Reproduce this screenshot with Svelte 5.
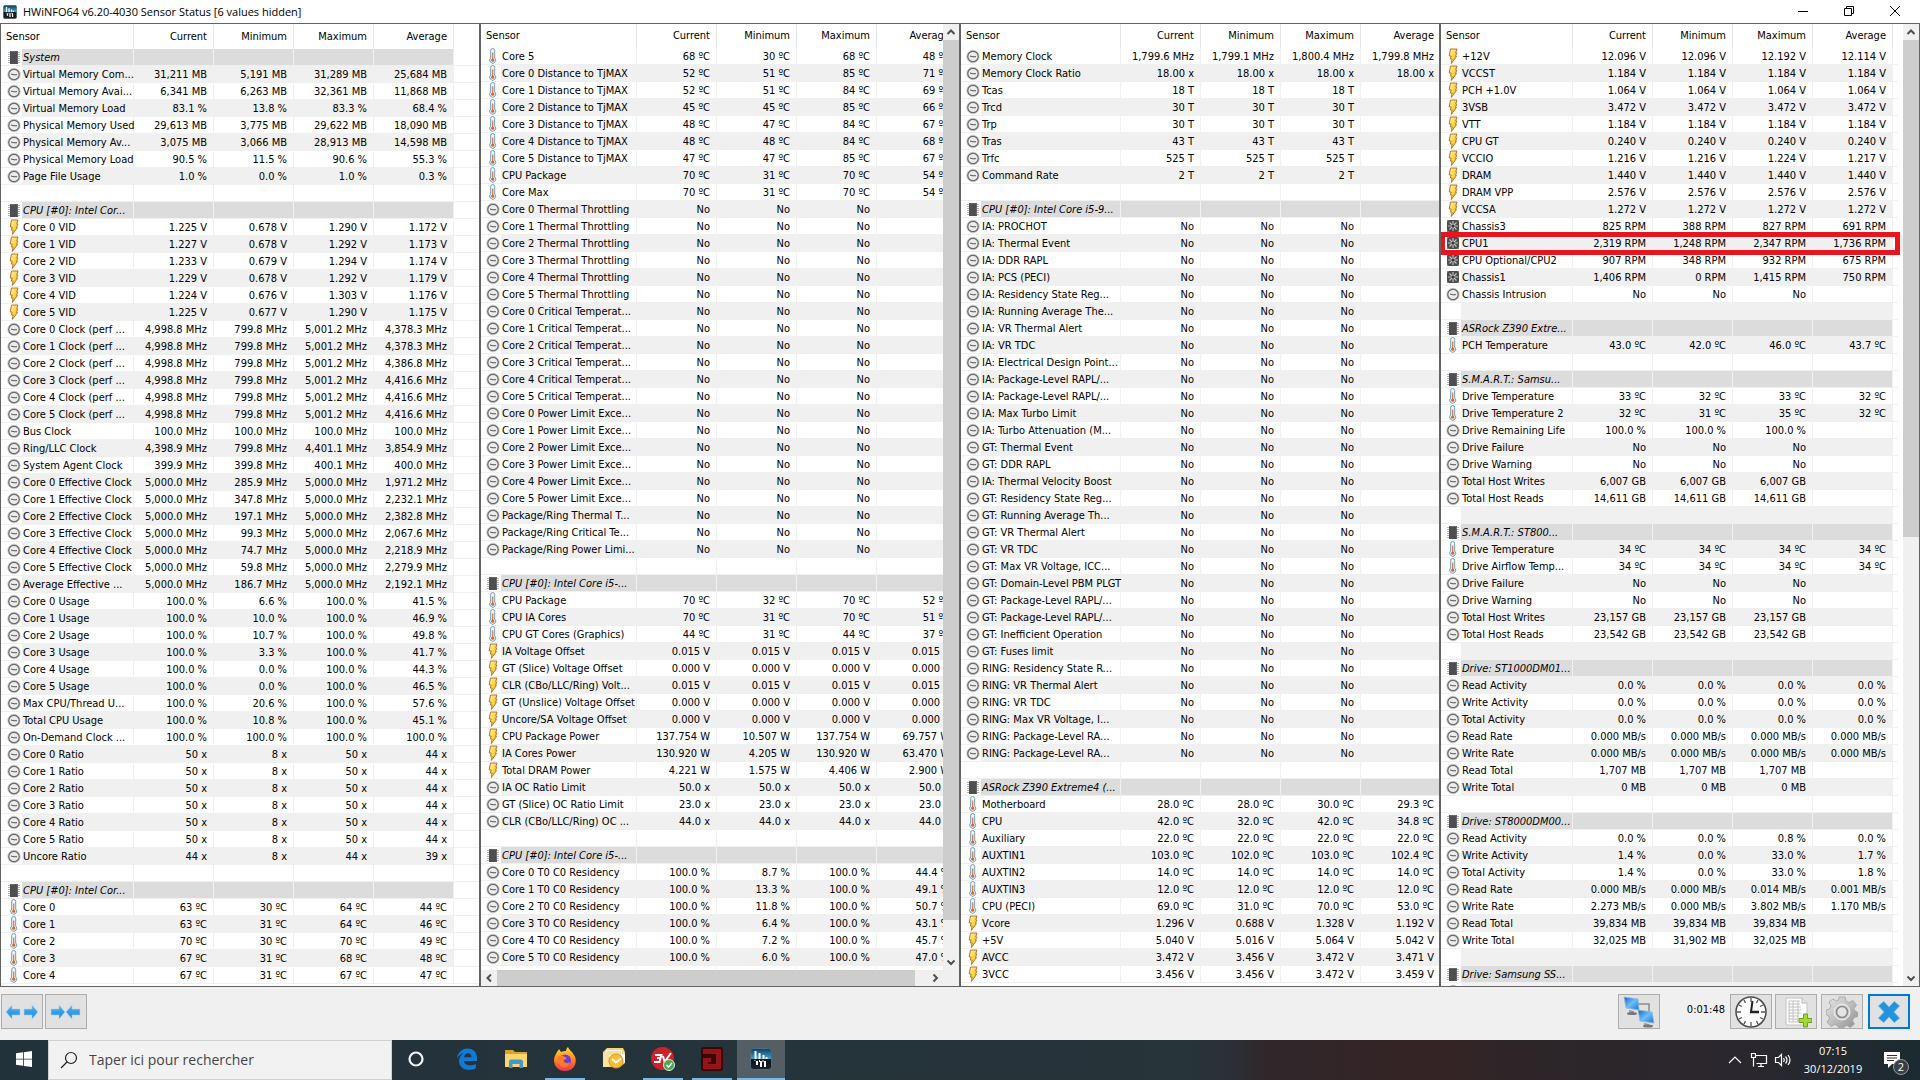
<script>
  const parse = (text) =>
    text.trim().split('\n').map((line) => {
      const [kind, name = '', ...values] = line.split('|');
      if (kind === 'n') return { kind: 'clock', name, values: ['No', 'No', 'No', ''] };
      if (kind === 'm') return { kind: 'fan', name, values: [...values], marked: true };
      const kinds = { h: 'chip', c: 'clock', v: 'bolt', t: 'temp', f: 'fan', '-': 'blank' };
      return { kind: kinds[kind], name, values: [0, 1, 2, 3].map((i) => values[i] ?? '') };
    });

  const panes = [
    {
      first: true, icon: 21, label: 112,
      rows: parse(`
h|System
c|Virtual Memory Com...|31,211 MB|5,191 MB|31,289 MB|25,684 MB
c|Virtual Memory Avai...|6,341 MB|6,263 MB|32,361 MB|11,868 MB
c|Virtual Memory Load|83.1 %|13.8 %|83.3 %|68.4 %
c|Physical Memory Used|29,613 MB|3,775 MB|29,622 MB|18,090 MB
c|Physical Memory Av...|3,075 MB|3,066 MB|28,913 MB|14,598 MB
c|Physical Memory Load|90.5 %|11.5 %|90.6 %|55.3 %
c|Page File Usage|1.0 %|0.0 %|1.0 %|0.3 %
-
h|CPU [#0]: Intel Cor...
v|Core 0 VID|1.225 V|0.678 V|1.290 V|1.172 V
v|Core 1 VID|1.227 V|0.678 V|1.292 V|1.173 V
v|Core 2 VID|1.233 V|0.679 V|1.294 V|1.174 V
v|Core 3 VID|1.229 V|0.678 V|1.292 V|1.179 V
v|Core 4 VID|1.224 V|0.676 V|1.303 V|1.176 V
v|Core 5 VID|1.225 V|0.677 V|1.290 V|1.175 V
c|Core 0 Clock (perf ...|4,998.8 MHz|799.8 MHz|5,001.2 MHz|4,378.3 MHz
c|Core 1 Clock (perf ...|4,998.8 MHz|799.8 MHz|5,001.2 MHz|4,378.3 MHz
c|Core 2 Clock (perf ...|4,998.8 MHz|799.8 MHz|5,001.2 MHz|4,386.8 MHz
c|Core 3 Clock (perf ...|4,998.8 MHz|799.8 MHz|5,001.2 MHz|4,416.6 MHz
c|Core 4 Clock (perf ...|4,998.8 MHz|799.8 MHz|5,001.2 MHz|4,416.6 MHz
c|Core 5 Clock (perf ...|4,998.8 MHz|799.8 MHz|5,001.2 MHz|4,416.6 MHz
c|Bus Clock|100.0 MHz|100.0 MHz|100.0 MHz|100.0 MHz
c|Ring/LLC Clock|4,398.9 MHz|799.8 MHz|4,401.1 MHz|3,854.9 MHz
c|System Agent Clock|399.9 MHz|399.8 MHz|400.1 MHz|400.0 MHz
c|Core 0 Effective Clock|5,000.0 MHz|285.9 MHz|5,000.0 MHz|1,971.2 MHz
c|Core 1 Effective Clock|5,000.0 MHz|347.8 MHz|5,000.0 MHz|2,232.1 MHz
c|Core 2 Effective Clock|5,000.0 MHz|197.1 MHz|5,000.0 MHz|2,382.8 MHz
c|Core 3 Effective Clock|5,000.0 MHz|99.3 MHz|5,000.0 MHz|2,067.6 MHz
c|Core 4 Effective Clock|5,000.0 MHz|74.7 MHz|5,000.0 MHz|2,218.9 MHz
c|Core 5 Effective Clock|5,000.0 MHz|59.8 MHz|5,000.0 MHz|2,279.9 MHz
c|Average Effective ...|5,000.0 MHz|186.7 MHz|5,000.0 MHz|2,192.1 MHz
c|Core 0 Usage|100.0 %|6.6 %|100.0 %|41.5 %
c|Core 1 Usage|100.0 %|10.0 %|100.0 %|46.9 %
c|Core 2 Usage|100.0 %|10.7 %|100.0 %|49.8 %
c|Core 3 Usage|100.0 %|3.3 %|100.0 %|41.7 %
c|Core 4 Usage|100.0 %|0.0 %|100.0 %|44.3 %
c|Core 5 Usage|100.0 %|0.0 %|100.0 %|46.5 %
c|Max CPU/Thread U...|100.0 %|20.6 %|100.0 %|57.6 %
c|Total CPU Usage|100.0 %|10.8 %|100.0 %|45.1 %
c|On-Demand Clock ...|100.0 %|100.0 %|100.0 %|100.0 %
c|Core 0 Ratio|50 x|8 x|50 x|44 x
c|Core 1 Ratio|50 x|8 x|50 x|44 x
c|Core 2 Ratio|50 x|8 x|50 x|44 x
c|Core 3 Ratio|50 x|8 x|50 x|44 x
c|Core 4 Ratio|50 x|8 x|50 x|44 x
c|Core 5 Ratio|50 x|8 x|50 x|44 x
c|Uncore Ratio|44 x|8 x|44 x|39 x
-
h|CPU [#0]: Intel Cor...
t|Core 0|63 ºC|30 ºC|64 ºC|44 ºC
t|Core 1|63 ºC|31 ºC|64 ºC|46 ºC
t|Core 2|70 ºC|30 ºC|70 ºC|49 ºC
t|Core 3|67 ºC|31 ºC|68 ºC|48 ºC
t|Core 4|67 ºC|31 ºC|67 ºC|47 ºC`)
    },
    {
      icon: 20, label: 136, vthumb: 96.3, hthumb: 97.2,
      rows: parse(`
t|Core 5|68 ºC|30 ºC|68 ºC|48 ºC
t|Core 0 Distance to TjMAX|52 ºC|51 ºC|85 ºC|71 ºC
t|Core 1 Distance to TjMAX|52 ºC|51 ºC|84 ºC|69 ºC
t|Core 2 Distance to TjMAX|45 ºC|45 ºC|85 ºC|66 ºC
t|Core 3 Distance to TjMAX|48 ºC|47 ºC|84 ºC|67 ºC
t|Core 4 Distance to TjMAX|48 ºC|48 ºC|84 ºC|68 ºC
t|Core 5 Distance to TjMAX|47 ºC|47 ºC|85 ºC|67 ºC
t|CPU Package|70 ºC|31 ºC|70 ºC|54 ºC
t|Core Max|70 ºC|31 ºC|70 ºC|54 ºC
n|Core 0 Thermal Throttling
n|Core 1 Thermal Throttling
n|Core 2 Thermal Throttling
n|Core 3 Thermal Throttling
n|Core 4 Thermal Throttling
n|Core 5 Thermal Throttling
n|Core 0 Critical Temperat...
n|Core 1 Critical Temperat...
n|Core 2 Critical Temperat...
n|Core 3 Critical Temperat...
n|Core 4 Critical Temperat...
n|Core 5 Critical Temperat...
n|Core 0 Power Limit Exce...
n|Core 1 Power Limit Exce...
n|Core 2 Power Limit Exce...
n|Core 3 Power Limit Exce...
n|Core 4 Power Limit Exce...
n|Core 5 Power Limit Exce...
n|Package/Ring Thermal T...
n|Package/Ring Critical Te...
n|Package/Ring Power Limi...
-
h|CPU [#0]: Intel Core i5-...
t|CPU Package|70 ºC|32 ºC|70 ºC|52 ºC
t|CPU IA Cores|70 ºC|31 ºC|70 ºC|51 ºC
t|CPU GT Cores (Graphics)|44 ºC|31 ºC|44 ºC|37 ºC
v|IA Voltage Offset|0.015 V|0.015 V|0.015 V|0.015 V
v|GT (Slice) Voltage Offset|0.000 V|0.000 V|0.000 V|0.000 V
v|CLR (CBo/LLC/Ring) Volt...|0.015 V|0.015 V|0.015 V|0.015 V
v|GT (Unslice) Voltage Offset|0.000 V|0.000 V|0.000 V|0.000 V
v|Uncore/SA Voltage Offset|0.000 V|0.000 V|0.000 V|0.000 V
v|CPU Package Power|137.754 W|10.507 W|137.754 W|69.757 W
v|IA Cores Power|130.920 W|4.205 W|130.920 W|63.470 W
v|Total DRAM Power|4.221 W|1.575 W|4.406 W|2.900 W
c|IA OC Ratio Limit|50.0 x|50.0 x|50.0 x|50.0 x
c|GT (Slice) OC Ratio Limit|23.0 x|23.0 x|23.0 x|23.0 x
c|CLR (CBo/LLC/Ring) OC ...|44.0 x|44.0 x|44.0 x|44.0 x
-
h|CPU [#0]: Intel Core i5-...
c|Core 0 T0 C0 Residency|100.0 %|8.7 %|100.0 %|44.4 %
c|Core 1 T0 C0 Residency|100.0 %|13.3 %|100.0 %|49.1 %
c|Core 2 T0 C0 Residency|100.0 %|11.8 %|100.0 %|50.7 %
c|Core 3 T0 C0 Residency|100.0 %|6.4 %|100.0 %|43.1 %
c|Core 4 T0 C0 Residency|100.0 %|7.2 %|100.0 %|45.7 %
c|Core 5 T0 C0 Residency|100.0 %|6.0 %|100.0 %|47.0 %
-`)
    },
    {
      icon: 20, label: 140,
      rows: parse(`
c|Memory Clock|1,799.6 MHz|1,799.1 MHz|1,800.4 MHz|1,799.8 MHz
c|Memory Clock Ratio|18.00 x|18.00 x|18.00 x|18.00 x
c|Tcas|18 T|18 T|18 T
c|Trcd|30 T|30 T|30 T
c|Trp|30 T|30 T|30 T
c|Tras|43 T|43 T|43 T
c|Trfc|525 T|525 T|525 T
c|Command Rate|2 T|2 T|2 T
-
h|CPU [#0]: Intel Core i5-9...
n|IA: PROCHOT
n|IA: Thermal Event
n|IA: DDR RAPL
n|IA: PCS (PECI)
n|IA: Residency State Reg...
n|IA: Running Average The...
n|IA: VR Thermal Alert
n|IA: VR TDC
n|IA: Electrical Design Point...
n|IA: Package-Level RAPL/...
n|IA: Package-Level RAPL/...
n|IA: Max Turbo Limit
n|IA: Turbo Attenuation (M...
n|GT: Thermal Event
n|GT: DDR RAPL
n|IA: Thermal Velocity Boost
n|GT: Residency State Reg...
n|GT: Running Average Th...
n|GT: VR Thermal Alert
n|GT: VR TDC
n|GT: Max VR Voltage, ICC...
n|GT: Domain-Level PBM PLGT
n|GT: Package-Level RAPL/...
n|GT: Package-Level RAPL/...
n|GT: Inefficient Operation
n|GT: Fuses limit
n|RING: Residency State R...
n|RING: VR Thermal Alert
n|RING: VR TDC
n|RING: Max VR Voltage, I...
n|RING: Package-Level RA...
n|RING: Package-Level RA...
-
h|ASRock Z390 Extreme4 (...
t|Motherboard|28.0 ºC|28.0 ºC|30.0 ºC|29.3 ºC
t|CPU|42.0 ºC|32.0 ºC|42.0 ºC|34.8 ºC
t|Auxiliary|22.0 ºC|22.0 ºC|22.0 ºC|22.0 ºC
t|AUXTIN1|103.0 ºC|102.0 ºC|103.0 ºC|102.4 ºC
t|AUXTIN2|14.0 ºC|14.0 ºC|14.0 ºC|14.0 ºC
t|AUXTIN3|12.0 ºC|12.0 ºC|12.0 ºC|12.0 ºC
t|CPU (PECI)|69.0 ºC|31.0 ºC|70.0 ºC|53.0 ºC
v|Vcore|1.296 V|0.688 V|1.328 V|1.192 V
v|+5V|5.040 V|5.016 V|5.064 V|5.042 V
v|AVCC|3.472 V|3.456 V|3.472 V|3.471 V
v|3VCC|3.456 V|3.456 V|3.472 V|3.459 V`)
    },
    {
      icon: 20, label: 112, vthumb: 53.4,
      rows: parse(`
v|+12V|12.096 V|12.096 V|12.192 V|12.114 V
v|VCCST|1.184 V|1.184 V|1.184 V|1.184 V
v|PCH +1.0V|1.064 V|1.064 V|1.064 V|1.064 V
v|3VSB|3.472 V|3.472 V|3.472 V|3.472 V
v|VTT|1.184 V|1.184 V|1.184 V|1.184 V
v|CPU GT|0.240 V|0.240 V|0.240 V|0.240 V
v|VCCIO|1.216 V|1.216 V|1.224 V|1.217 V
v|DRAM|1.440 V|1.440 V|1.440 V|1.440 V
v|DRAM VPP|2.576 V|2.576 V|2.576 V|2.576 V
v|VCCSA|1.272 V|1.272 V|1.272 V|1.272 V
f|Chassis3|825 RPM|388 RPM|827 RPM|691 RPM
m|CPU1|2,319 RPM|1,248 RPM|2,347 RPM|1,736 RPM
f|CPU Optional/CPU2|907 RPM|348 RPM|932 RPM|675 RPM
f|Chassis1|1,406 RPM|0 RPM|1,415 RPM|750 RPM
n|Chassis Intrusion
-
h|ASRock Z390 Extre...
t|PCH Temperature|43.0 ºC|42.0 ºC|46.0 ºC|43.7 ºC
-
h|S.M.A.R.T.: Samsu...
t|Drive Temperature|33 ºC|32 ºC|33 ºC|32 ºC
t|Drive Temperature 2|32 ºC|31 ºC|35 ºC|32 ºC
c|Drive Remaining Life|100.0 %|100.0 %|100.0 %
n|Drive Failure
n|Drive Warning
c|Total Host Writes|6,007 GB|6,007 GB|6,007 GB
c|Total Host Reads|14,611 GB|14,611 GB|14,611 GB
-
h|S.M.A.R.T.: ST800...
t|Drive Temperature|34 ºC|34 ºC|34 ºC|34 ºC
t|Drive Airflow Temp...|34 ºC|34 ºC|34 ºC|34 ºC
n|Drive Failure
n|Drive Warning
c|Total Host Writes|23,157 GB|23,157 GB|23,157 GB
c|Total Host Reads|23,542 GB|23,542 GB|23,542 GB
-
h|Drive: ST1000DM01...
c|Read Activity|0.0 %|0.0 %|0.0 %|0.0 %
c|Write Activity|0.0 %|0.0 %|0.0 %|0.0 %
c|Total Activity|0.0 %|0.0 %|0.0 %|0.0 %
c|Read Rate|0.000 MB/s|0.000 MB/s|0.000 MB/s|0.000 MB/s
c|Write Rate|0.000 MB/s|0.000 MB/s|0.000 MB/s|0.000 MB/s
c|Read Total|1,707 MB|1,707 MB|1,707 MB
c|Write Total|0 MB|0 MB|0 MB
-
h|Drive: ST8000DM00...
c|Read Activity|0.0 %|0.0 %|0.8 %|0.0 %
c|Write Activity|1.4 %|0.0 %|33.0 %|1.7 %
c|Total Activity|1.4 %|0.0 %|33.0 %|1.8 %
c|Read Rate|0.000 MB/s|0.000 MB/s|0.014 MB/s|0.001 MB/s
c|Write Rate|2.273 MB/s|0.000 MB/s|3.802 MB/s|1.170 MB/s
c|Read Total|39,834 MB|39,834 MB|39,834 MB
c|Write Total|32,025 MB|31,902 MB|32,025 MB
-
h|Drive: Samsung SS...
c`)
    }
  ];
</script>

<svg class="defs" aria-hidden="true">
  <defs>
    <linearGradient id="gold" x1="0" y1="0" x2="1" y2="1">
      <stop offset="0" stop-color="#fff6c0" /><stop offset=".6" stop-color="#fbd02c" /><stop offset="1" stop-color="#f5b800" />
    </linearGradient>
    <linearGradient id="glass" x1="0" y1="0" x2="0" y2="1">
      <stop offset="0" stop-color="#123d5c" /><stop offset=".48" stop-color="#3d9fce" /><stop offset=".5" stop-color="#0a141c" /><stop offset="1" stop-color="#1a222a" />
    </linearGradient>
    <linearGradient id="blue" x1="0" y1="0" x2="0" y2="1">
      <stop offset="0" stop-color="#4fb4ee" /><stop offset="1" stop-color="#1f87dc" />
    </linearGradient>
    <linearGradient id="screen" x1="0" y1="0" x2="1" y2="1">
      <stop offset="0" stop-color="#1560c8" /><stop offset=".5" stop-color="#6cc0f8" /><stop offset="1" stop-color="#1a6fd6" />
    </linearGradient>
    <linearGradient id="fire" x1="0" y1="0" x2="0" y2="1">
      <stop offset="0" stop-color="#ffde3a" /><stop offset=".5" stop-color="#ff8a1e" /><stop offset="1" stop-color="#f0305a" />
    </linearGradient>
    <linearGradient id="steel" x1="0" y1="0" x2="1" y2="1">
      <stop offset="0" stop-color="#e6e6e6" /><stop offset=".5" stop-color="#bdbdbd" /><stop offset="1" stop-color="#8c8c8c" />
    </linearGradient>
    <symbol id="chip" viewBox="0 0 14 16">
      <path d="M1 3.5h12M1 5.5h12M1 7.5h12M1 9.5h12M1 11.5h12M1 13.5h12" stroke="#b4b4b4" />
      <rect x="3" y="2" width="8" height="13" fill="#4e4e52" /><path d="M3.500 2.500h7v12" fill="none" stroke="#68686c" />
    </symbol>
    <symbol id="clock" viewBox="0 0 14 16">
      <circle cx="7" cy="8.500" r="5.300" fill="#ececec" stroke="#6b6b6b" stroke-width="1.400" />
      <circle cx="7" cy="8.500" r="6.300" fill="none" stroke="#b5b5b5" stroke-width=".6" />
      <path d="M4 8l3 .8 3-.1" fill="none" stroke="#555" />
    </symbol>
    <symbol id="bolt" viewBox="0 0 14 16">
      <path d="M4.500 1h6.500l-1.300 4h1.100l-1.300 3.500h1L5.300 15.500l.8-4.500H4.300l.9-3H3.200z" fill="url(#gold)" stroke="#b87434" />
    </symbol>
    <symbol id="temp" viewBox="0 0 14 16">
      <path d="M4.700 2.500a2 2 0 0 1 4 0V10a3 3 0 1 1-4 0z" fill="#eef6fb" stroke="#6f9db8" />
      <path d="M6.700 4.500v8" stroke="#d8733a" stroke-width="1.200" /><circle cx="6.700" cy="12.200" r="1.600" fill="#d9652a" />
    </symbol>
    <symbol id="fan" viewBox="0 0 14 16">
      <rect x="1" y="2" width="12" height="12" fill="#4c4c4c" />
      <path d="M7 3v10M2 8h10M3.500 4.500l7 7M10.500 4.500l-7 7" stroke="#c4c4c4" stroke-width="1.100" />
      <circle cx="7" cy="8" r="1.600" fill="#333" /><path d="M1.500 3.500v-1h1M11.500 2.500h1v1M12.500 12.500v1h-1M2.500 13.500h-1v-1" fill="none" stroke="#999" />
    </symbol>
    <symbol id="hwlogo" viewBox="0 0 22 22">
      <rect x=".5" y=".5" width="21" height="21" rx="3" fill="url(#glass)" stroke="#4f6b7c" />
      <path d="M5.500 3v8M9.500 5v6M13.500 7v4M16.500 9v2M7 13v4M11 13v6M15 13v6" stroke="#fff" stroke-width="2" />
      <path d="M9.500 12v2M13 12v2M5 12v1" stroke="#fff" />
    </symbol>
    <symbol id="up" viewBox="0 0 16 16"><path d="M4.500 10L8 6.500l3.500 3.500" fill="none" stroke="#505050" stroke-width="2" /></symbol>
    <symbol id="down" viewBox="0 0 16 16"><path d="M4.500 6.500L8 10l3.500-3.500" fill="none" stroke="#505050" stroke-width="2" /></symbol>
    <symbol id="left" viewBox="0 0 16 16"><path d="M10 4.500L6.500 8l3.500 3.500" fill="none" stroke="#505050" stroke-width="2" /></symbol>
    <symbol id="right" viewBox="0 0 16 16"><path d="M6.500 4.500L10 8l-3.500 3.500" fill="none" stroke="#505050" stroke-width="2" /></symbol>
  </defs>
</svg>

<div class="window">
  <header class="titlebar">
    <svg class="logo" aria-hidden="true"><use href="#hwlogo" /></svg>
    <h1>HWiNFO64 v6.20-4030 Sensor Status [6 values hidden]</h1>
    <button class="caption" aria-label="Minimize"><svg viewBox="0 0 12 12"><path d="M1 6.500h10" /></svg></button>
    <button class="caption" aria-label="Restore"><svg viewBox="0 0 12 12"><path d="M1.500 3.500h7v7h-7zM3.500 3.500v-2h7v7h-2" /></svg></button>
    <button class="caption" aria-label="Close"><svg viewBox="0 0 12 12"><path d="M1 1l10 10M11 1L1 11" /></svg></button>
  </header>

  <main class="panes">
    {#each panes as pane}
      <section class="pane" class:first={pane.first}>
        <div class="upper">
          <div class="view">
            <table>
              <colgroup>
                <col style:width="{pane.icon}px" /><col style:width="{pane.label}px" />
                <col class="num" /><col class="num" /><col class="num" /><col class="num" /><col class="rest" />
              </colgroup>
              <thead>
                <tr><th colspan="2" class="name">Sensor</th><th>Current</th><th>Minimum</th><th>Maximum</th><th>Average</th><td></td></tr>
              </thead>
              <tbody>
                {#each pane.rows as row, i}
                  <tr class:alt={i % 2 === 1} class:group={row.kind === 'chip'} class:marked={row.marked}>
                    <td class="icon">
                      {#if row.kind !== 'blank'}<svg aria-hidden="true"><use href="#{row.kind}" /></svg>{/if}
                    </td>
                    <td class="label">{row.name}</td>
                    {#each row.values as value}<td class="value">{value}</td>{/each}
                    <td class="tail"></td>
                  </tr>
                {/each}
              </tbody>
            </table>
          </div>
          {#if pane.vthumb}
            <div class="vbar">
              <button aria-label="Scroll up"><svg><use href="#up" /></svg></button>
              <div class="track"><div class="thumb" style:height="{pane.vthumb}%"></div></div>
              <button aria-label="Scroll down"><svg><use href="#down" /></svg></button>
            </div>
          {/if}
        </div>
        {#if pane.hthumb}
          <div class="hbar">
            <button aria-label="Scroll left"><svg><use href="#left" /></svg></button>
            <div class="track"><div class="thumb" style:width="{pane.hthumb}%"></div></div>
            <button aria-label="Scroll right"><svg><use href="#right" /></svg></button>
          </div>
        {/if}
      </section>
    {/each}
  </main>

  <div class="toolbar">
    <button class="tool" aria-label="Expand columns">
      <svg viewBox="0 0 32 16"><path d="M0 8l6-7v4h8v6H6v4zM32 8l-6-7v4h-8v6h8v4z" fill="url(#blue)" stroke="#a9d4f5" stroke-width=".6" /></svg>
    </button>
    <button class="tool" aria-label="Shrink columns">
      <svg viewBox="0 0 32 16"><path d="M15 8L9 1v4H1v6h8v4zM16 8l6-7v4h8v6h-8v4z" fill="url(#blue)" stroke="#a9d4f5" stroke-width=".6" /></svg>
    </button>
    <span class="spring"></span>
    <button class="tool network" aria-label="Remote connection">
      <svg viewBox="0 0 32 32">
        <path d="M15 8h11v8" fill="none" stroke="#8a8a8a" stroke-width="1.500" />
        <path d="M6 14l5 1v2H6zM21 27l5 1v2h-5z" fill="#9a9a9a" /><ellipse cx="9" cy="17.500" rx="5" ry="1.500" fill="#777" /><ellipse cx="25" cy="30" rx="5" ry="1.500" fill="#777" />
        <path d="M1 1l14 2 1 11-13-2z" fill="url(#screen)" stroke="#8fb8d8" stroke-width=".8" />
        <path d="M15 14l14 2 2 11-14-2z" fill="url(#screen)" stroke="#8fb8d8" stroke-width=".8" />
      </svg>
    </button>
    <span class="elapsed">0:01:48</span>
    <button class="tool timer" aria-label="Reset timer">
      <svg viewBox="0 0 32 32">
        <circle cx="16" cy="16" r="15" fill="#fbfbfb" stroke="#4a4a4a" stroke-width="1.500" />
        <path d="M16 2v4M16 26v4M2 16h4M26 16h4M9 4l1.500 3M23 4l-1.500 3M4 9l3 1.500M28 9l-3 1.500M4 23l3-1.500M28 23l-3-1.500M9 28l1.500-3M23 28l-1.500-3" stroke="#555" stroke-width="1.300" />
        <path d="M17.500 5L16 16" stroke="#222" stroke-width="2" /><path d="M15 16h9" stroke="#222" stroke-width="2.500" />
      </svg>
    </button>
    <button class="tool log" aria-label="Start logging">
      <svg viewBox="0 0 32 32">
        <path d="M6 2h16l5 5v22H6z" fill="#fbfbfb" stroke="#c4c4c4" /><path d="M22 2v5h5" fill="#e4e4e4" stroke="#bbb" />
        <path d="M9 5h11M9 8h11M9 11h12M9 14h12M9 17h12M9 20h10M9 23h9M9 26h9M9 5v21M13 5v21M18 5v21" fill="none" stroke="#c2c2c2" />
        <path d="M23.500 18h4v4.500H32v4h-4.500V31h-4v-4.500H19v-4h4.500z" fill="#a6d637" stroke="#6f9f1e" />
      </svg>
    </button>
    <button class="tool gear" aria-label="Settings">
      <svg viewBox="0 0 32 32">
        <path d="M13 1h6l1 4 3 1.500 4-2 3.500 4.500-2.500 3.500 1 2.500 3 1.500v4l-4 1-1.500 3 2 3.500-4 3.500-3.500-2-2.500 1-1.500 3h-4l-1.500-4-3-1-3.500 2L1 26l2.500-3.500L2.500 20 0 18.500V14l3.500-1 1.500-3-2-4 4-3 3.500 2 2-.8z" fill="url(#steel)" stroke="#a2a2a2" stroke-width=".8" />
        <circle cx="16" cy="16" r="8" fill="#d5d5d5" stroke="#eee" /><circle cx="16" cy="16" r="5.500" fill="#e4e4e4" stroke="#8a8a8a" stroke-width="1.600" />
      </svg>
    </button>
    <button class="tool close" aria-label="Close sensors">
      <svg viewBox="0 0 32 32"><path d="M4 9l6-5 6 6.500L22 4l6 5-6.500 7 6.500 7-6 5-6-6.500L10 28l-6-5 6.500-7z" fill="#2493dc" stroke="#58b2ea" /></svg>
    </button>
  </div>
</div>

<footer class="taskbar">
  <button class="task start" aria-label="Start">
    <svg viewBox="0 0 16 16"><path d="M0 2.300l7-1v6.400H0zM7.800 1.200L16 0v7.700H7.800zM0 8.500h7v6.300l-7-1zM7.800 8.500H16V16l-8.200-1.100z" fill="#fff" /></svg>
  </button>
  <label class="search">
    <svg viewBox="0 0 18 18"><circle cx="11" cy="7" r="5.500" /><path d="M7 11l-6 6" /></svg>
    <input type="text" placeholder="Taper ici pour rechercher" aria-label="Taper ici pour rechercher" />
  </label>
  <nav class="apps">
    <button class="task cortana" aria-label="Cortana"><svg viewBox="0 0 24 24"><circle cx="12" cy="12" r="6.500" fill="none" stroke="#f4f4f4" stroke-width="2.200" /></svg></button>
    <button class="task" aria-label="Edge">
      <svg viewBox="0 0 24 24"><path d="M2 11.500C3 4.500 8 1.500 12.700 1.500c5.800 0 9.300 4.300 9.300 9.500v3H9c.2 3 3 4.300 6 4.300 2.200 0 4.200-.6 5.800-1.600v4.600c-2 1-4.300 1.500-6.800 1.500-6 0-10-3.600-10-8.800 0-3.600 2-6.500 5-8C5.800 6.800 3.500 8.700 2 11.500zM9 10.300h7.500c0-2.600-1.400-4.100-3.500-4.100-2.200 0-3.600 1.700-4 4.100z" fill="#0f7bd8" /></svg>
    </button>
    <button class="task" aria-label="File Explorer">
      <svg viewBox="0 0 24 24"><path d="M1 3h8l2 2h12v3H1z" fill="#d9a233" /><path d="M1 7h22v13H1z" fill="#fbd768" /><path d="M5 21v-7l1.500-1.500h11L19 14v7h-3.500v-4h-7v4z" fill="#3f97d3" /></svg>
    </button>
    <button class="task open" aria-label="Firefox">
      <svg viewBox="0 0 24 24"><path d="M4 5c1-2 2-2 2-3l2 3c2-1 4-1 5-1 0-2 1-3 2-4 1 3 4 4 6 8 2 3 2 5 1.500 8-1 5-5 8-10.500 8C5.500 24 1 19 1 13.500 1 10 2.500 8 4 5z" fill="url(#fire)" /><circle cx="12" cy="13.500" r="6" fill="#6a3fd0" /><path d="M5 10c3-2 5-1 7 0 2 .5 2 2 0 2.500-2 .5-2 2.500 1 3.500 2 .5 3-.5 4-1-1 4-4 6-7.500 5C5 19 4 14 5 10z" fill="#ff7a28" /></svg>
    </button>
    <button class="task" aria-label="Outlook">
      <svg viewBox="0 0 24 24"><path d="M1 5l4-4h16l2 4v11l-5 4H1z" fill="#f7d57a" /><path d="M4 3h16v9H4z" fill="#fff8e2" /><path d="M5 5h14M5 7h14" stroke="#f0c45c" /><path d="M1 6h4l4 6-2 8H1z" fill="#fbe3a0" /><path d="M19 7h4v9l-5-4z" fill="#fff" /><circle cx="14" cy="14" r="7" fill="#f6bd35" stroke="#e0962a" /><path d="M10 12l4 3.500 5-4" fill="none" stroke="#fff" stroke-width="2" /></svg>
    </button>
    <button class="task open" aria-label="Driver update">
      <svg viewBox="0 0 24 24"><circle cx="11.500" cy="11.500" r="11.500" fill="#d0202a" /><path d="M4 8h6.500l-1 3H6M9.500 11l-1 4H3M12 9l1.500 6L20 6" fill="none" stroke="#fff" stroke-width="2" /><circle cx="18" cy="18" r="5.500" fill="#4ea64f" stroke="#d8efd8" /><path d="M15.500 18l2 2 3.500-4" fill="none" stroke="#fff" stroke-width="1.500" /></svg>
    </button>
    <button class="task open" aria-label="Game">
      <svg viewBox="0 0 24 24"><rect x="1" y="0" width="22" height="24" rx="3" fill="#3a0608" /><path d="M3 2h18v20H3V11h8v4h-3v2h8V7H3z" fill="#94141a" /></svg>
    </button>
    <button class="task active" aria-label="HWiNFO64"><svg><use href="#hwlogo" /></svg></button>
  </nav>
  <div class="tray">
    <button class="trayicon" aria-label="Show hidden icons"><svg viewBox="0 0 18 16"><path d="M3 11l6-6 6 6" /></svg></button>
    <button class="trayicon" aria-label="Network"><svg viewBox="0 0 18 16"><path d="M5.500 3.500h11v8h-10M11 12v3M8 14.500h6M1.500 1.500h4v4h-4zM3.500 5.500v9" /></svg></button>
    <button class="trayicon" aria-label="Volume"><svg viewBox="0 0 18 16"><path d="M1.500 5.500h3l3-3v11l-3-3h-3zM9.500 6q1.500 2 0 4M11.500 4.500q3 3.500 0 7M14 3q4 5 0 10" /></svg></button>
    <div class="datetime"><time>07:15</time><time>30/12/2019</time></div>
    <button class="notify" aria-label="Notifications">
      <svg viewBox="0 0 18 18"><path d="M1 1h16v12h-8l-4 4v-4H1z" fill="#fff" /><path d="M4 4.500h10M4 7h10M4 9.500h7" stroke="#2a2c30" /></svg>
      <span class="badge">2</span>
    </button>
    <span class="peek"></span>
  </div>
</footer>

<style>
  :global(body) { background: #f0f0f0; }
  :global(#app) { display: flex; flex-direction: column; height: 100vh; overflow: hidden; }
  * { box-sizing: border-box; }
  button { border: 0; padding: 0; background: none; font: inherit; color: inherit; display: flex; align-items: center; justify-content: center; }
  .defs { position: absolute; width: 0; height: 0; }
  .window { flex: 1; min-height: 0; display: flex; flex-direction: column; font: 11px/16px "DejaVu Sans Condensed", "DejaVu Sans", sans-serif; color: #000; }

  .titlebar { height: 23px; flex: none; display: flex; align-items: center; background: #fff; padding-left: 3px; }
  .logo { width: 14px; height: 14px; }
  h1 { flex: 1; margin: 0 0 0 6px; font: 11px/22px "Open Sans", sans-serif; white-space: nowrap; }
  .caption { width: 46px; height: 20px; margin-bottom: 2px; }
  .titlebar { padding-right: 2px; }
  .caption svg { width: 12px; height: 12px; fill: none; stroke: #000; }

  .panes { flex: 1; min-height: 0; display: flex; }
  .pane { flex: 1 1 0; min-width: 0; display: flex; flex-direction: column; border: 1px solid #646464; background: #fff; }
  .upper { flex: 1; min-height: 0; display: flex; }
  .view { flex: 1; min-width: 0; overflow: hidden; }
  table { width: 100%; table-layout: fixed; border-spacing: 0; }
  .num { width: 80px; }
  th { height: 24px; padding: 0 6px 0 0; font-weight: normal; text-align: right; border-right: 1px solid #e5e5e5; line-height: 16px; }
  .first th { height: 25px; padding-top: 1px; }
  th.name { text-align: left; padding-left: 5px; }
  td { height: 17px; padding: 2px 0 0; line-height: 14px; white-space: nowrap; }
  tbody td { border-bottom: 1px solid #f0f0f0; }
  .icon { padding: 0 1px 0 0; line-height: 0; text-align: right; background: #fff; }
  .icon svg { width: 14px; height: 16px; vertical-align: top; }
  .label { padding-left: 1px; border-right: 1px solid #f0f0f0; }
  .value { padding-right: 6px; text-align: right; border-right: 1px solid #f0f0f0; }
  .tail { background: #fff; }
  .alt { background: #f0f0f0; }
  .group { background: #dcdcdc; }
  .group .label { font-style: italic; }
  .marked { position: relative; }
  .marked::after { content: ""; position: absolute; inset: -3px 3px -3px 0; border: 5px solid #e8141e; border-width: 5px 5px 5px 4px; }

  .vbar { width: 16px; display: flex; flex-direction: column; background: #f0f0f0; }
  .hbar { height: 16px; padding-right: 16px; display: flex; background: #f0f0f0; }
  .vbar button, .hbar button { flex: none; width: 16px; height: 16px; }
  .vbar svg, .hbar svg { width: 16px; height: 16px; }
  .track { flex: 1; min-width: 0; min-height: 0; }
  .thumb { width: 100%; height: 100%; background: #cdcdcd; }

  .toolbar { height: 53px; flex: none; display: flex; align-items: flex-start; padding: 7px 10px 0 1px; background: #f0f0f0; }
  .tool { width: 42px; height: 35px; background: #e1e1e1; border: 1px solid #adadad; margin-right: 2px; }
  .tool svg { width: 32px; height: 32px; }
  .spring { flex: 1; }
  .elapsed { width: 63px; text-align: right; line-height: 32px; margin-right: 5px; }
  .timer { margin-right: 3px; }
  .log { margin-right: 4px; }
  .gear { margin-right: 5px; }
  .close { margin-right: 0; border: 2px solid #0078d7; }
  .close svg { width: 28px; height: 28px; }

  .taskbar { flex: none; height: 40px; display: flex; color: #fff; background: linear-gradient(90deg, #22323b 0%, #27343a 62%, #2a2f38 64%, #31272b 66%, #352425 75%, #2d2528 79%, #29272e 92%, #23292f 95%, #1b2b31 100%); }
  .task { width: 48px; height: 40px; border-bottom: 2px solid transparent; }
  .task svg { width: 24px; height: 24px; }
  .start svg { width: 16px; height: 16px; }
  .search { width: 344px; display: flex; align-items: center; background: #f2f2f2; border: 1px solid #d0d0d0; padding-left: 11px; gap: 11px; }
  .search svg { width: 18px; height: 18px; fill: none; stroke: #222; stroke-width: 1.2; }
  .search input { flex: 1; min-width: 0; border: 0; background: none; padding: 0; outline: 0; font: 14px/20px "Open Sans", sans-serif; }
  .search input::placeholder { color: #444; opacity: 1; }
  .apps { flex: 1; display: flex; gap: 1px; }
  .cortana { margin-right: 2px; }
  .open { width: 40px; margin: 0 4px; border-bottom-color: #76b9ed; }
  .active { background: #535f65; border-bottom-color: #76b9ed; }
  .active svg { width: 22px; height: 22px; }
  .tray { display: flex; align-items: center; }
  .trayicon { width: 24px; height: 40px; }
  .trayicon svg { width: 18px; height: 16px; fill: none; stroke: #fff; stroke-width: 1.2; }
  .datetime { width: 76px; display: flex; flex-direction: column; align-items: center; font: 11px/18px "Open Sans", sans-serif; }
  .notify { width: 41px; height: 40px; position: relative; }
  .notify svg { width: 18px; height: 18px; }
  .badge { position: absolute; left: 22px; top: 19px; width: 16px; height: 16px; border-radius: 8px; background: #3a3f44; border: 1px solid #999; font: 11px/14px "Open Sans", sans-serif; text-align: center; }
  .peek { width: 8px; height: 40px; border-right: 4px solid transparent; }
</style>
